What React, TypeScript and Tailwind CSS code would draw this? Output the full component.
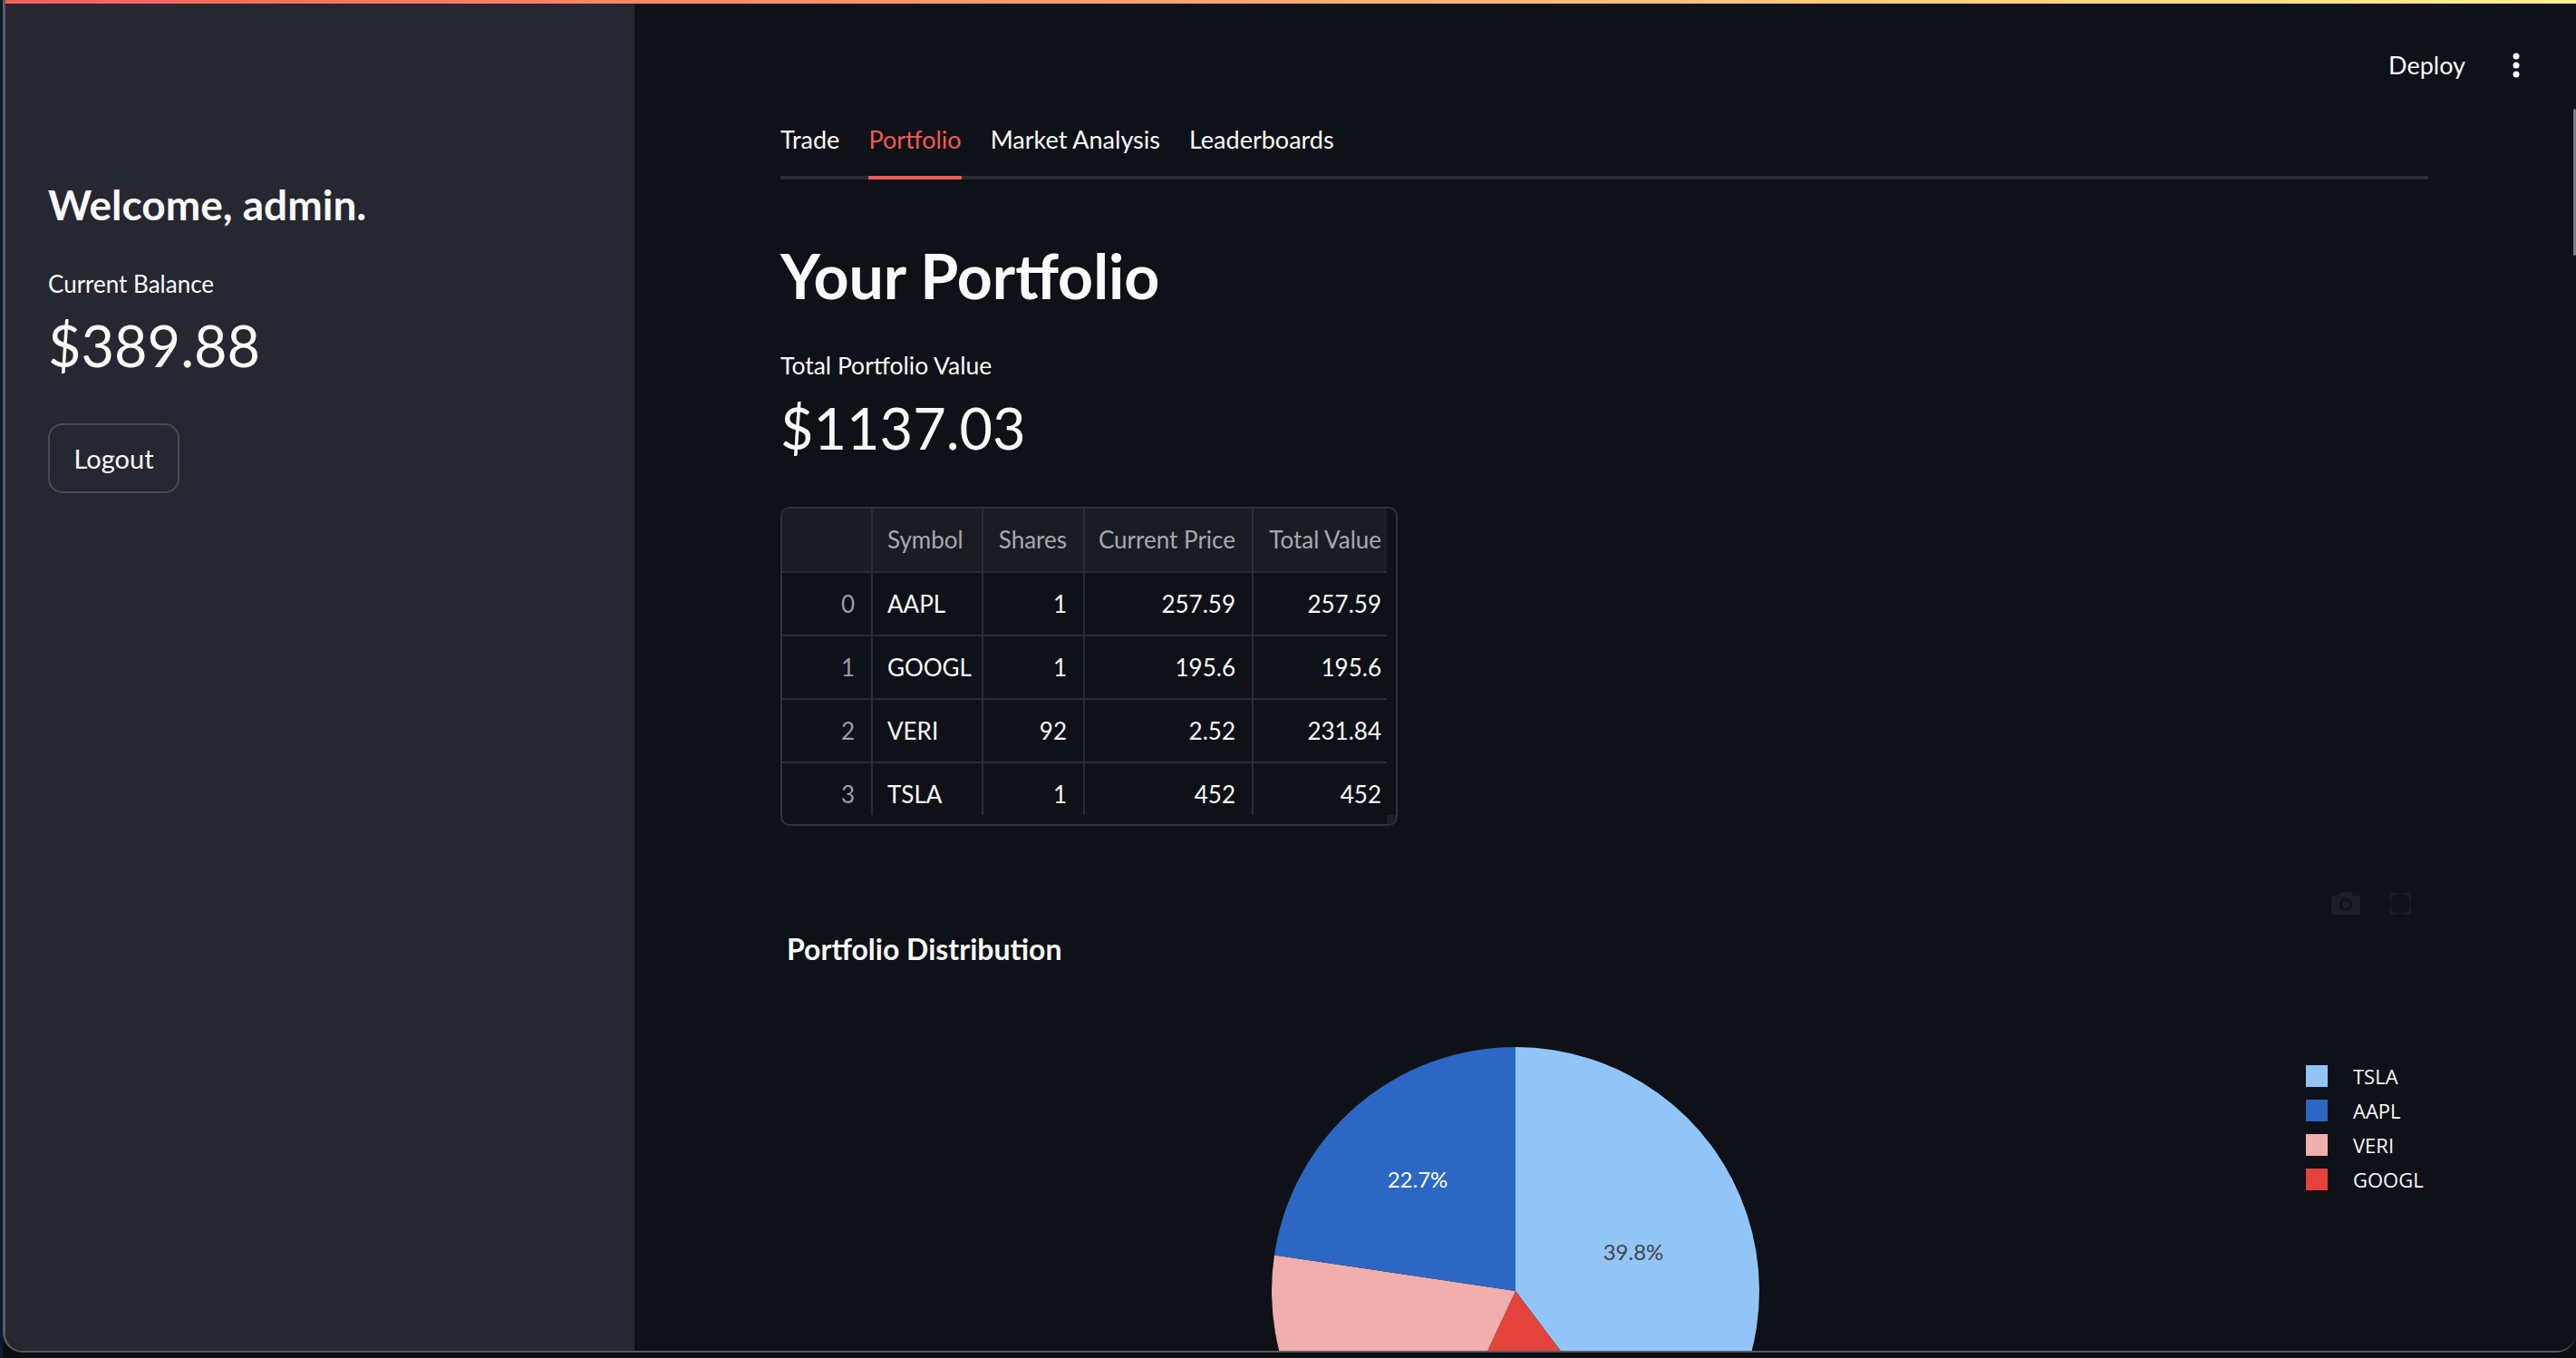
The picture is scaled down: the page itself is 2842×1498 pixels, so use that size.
import React from 'react';

interface Holding {
  index: number;
  symbol: string;
  shares: number;
  price: string;
  total: string;
}

const holdings: Holding[] = [
  { index: 0, symbol: 'AAPL', shares: 1, price: '257.59', total: '257.59' },
  { index: 1, symbol: 'GOOGL', shares: 1, price: '195.6', total: '195.6' },
  { index: 2, symbol: 'VERI', shares: 92, price: '2.52', total: '231.84' },
  { index: 3, symbol: 'TSLA', shares: 1, price: '452', total: '452' },
];

const tabs = ['Trade', 'Portfolio', 'Market Analysis', 'Leaderboards'];

// pie slices, clockwise from 12 o'clock, centre (270,270) r 269
const slices = [
  { label: 'TSLA', color: '#92c5f7', d: 'M270 270 L270 1 A269 269 0 0 1 431.5 485.1 Z' },
  { label: 'GOOGL', color: '#e4433b', d: 'M270 270 L431.5 485.1 A269 269 0 0 1 156.2 513.7 Z' },
  { label: 'VERI', color: '#f0aeac', d: 'M270 270 L156.2 513.7 A269 269 0 0 1 3.9 230.5 Z' },
  { label: 'AAPL', color: '#2c67c4', d: 'M270 270 L3.9 230.5 A269 269 0 0 1 270 1 Z' },
];

const legend = [
  { label: 'TSLA', color: '#92c5f7' },
  { label: 'AAPL', color: '#2c67c4' },
  { label: 'VERI', color: '#f0aeac' },
  { label: 'GOOGL', color: '#e4433b' },
];

const HoldingsTable = () => {
  return (
    <div className="flex h-[352px] w-[681px] flex-col overflow-hidden rounded-[10px] border-2 border-[#30323a] text-[26px]">
      <div className="flex h-[338px]">
        <div className="w-[667px] overflow-hidden">
          <div className="flex h-[71px] w-[679px] border-b-2 border-[#2a2c33] bg-[#1a1c23] text-[#a6a9b0]">
            <div className="w-[100px] shrink-0 border-r-2 border-[#2a2c33]" />
            <div className="flex w-[122px] shrink-0 items-center border-r-2 border-[#2a2c33] pl-[16px]">Symbol</div>
            <div className="flex w-[112px] shrink-0 items-center justify-end border-r-2 border-[#2a2c33] pr-[18px]">Shares</div>
            <div className="flex w-[186px] shrink-0 items-center justify-end border-r-2 border-[#2a2c33] pr-[18px]">Current Price</div>
            <div className="flex w-[159px] shrink-0 items-center justify-end pr-[18px]">Total Value</div>
          </div>
          {holdings.map((h) => (
            <div key={h.symbol} className="flex h-[70px] w-[679px] shrink-0 border-b-2 border-[#2a2c33]">
              <div className="flex w-[100px] shrink-0 items-center justify-end border-r-2 border-[#2a2c33] pr-[18px] text-[#9a9da5]">{h.index}</div>
              <div className="flex w-[122px] shrink-0 items-center border-r-2 border-[#2a2c33] pl-[16px]">{h.symbol}</div>
              <div className="flex w-[112px] shrink-0 items-center justify-end border-r-2 border-[#2a2c33] pr-[18px]">{h.shares}</div>
              <div className="flex w-[186px] shrink-0 items-center justify-end border-r-2 border-[#2a2c33] pr-[18px]">{h.price}</div>
              <div className="flex w-[159px] shrink-0 items-center justify-end pr-[18px]">{h.total}</div>
            </div>
          ))}
        </div>
        <div className="w-[10px]" />
      </div>
      <div className="flex h-[10px] justify-end">
        <div className="h-[10px] w-[10px] bg-[#1e2026]" />
      </div>
    </div>
  );
};

const PortfolioChart = () => {
  return (
    <div className="mt-[73px] flex flex-col">
      <div className="flex h-[25px] items-center justify-end gap-[32px] pr-[19px]">
        <svg width="32" height="25" viewBox="0 0 32 25">
          <path d="M11 0h10l3 4h6a2 2 0 0 1 2 2v17a2 2 0 0 1-2 2H2a2 2 0 0 1-2-2V6a2 2 0 0 1 2-2h6z" fill="#1c1e25" />
          <circle cx="16" cy="14" r="7" fill="#0e1117" />
          <circle cx="16" cy="14" r="4.5" fill="#1c1e25" />
        </svg>
        <svg width="24" height="24" viewBox="0 0 24 24" fill="none" stroke="#1c1e25" strokeWidth="3">
          <path d="M1 8V1h7M16 1h7v7M23 16v7h-7M8 23H1v-7" />
        </svg>
      </div>
      <h4 className="mt-[19px] pl-[7px] text-[32px] font-bold leading-[38px]">Portfolio Distribution</h4>
      <div className="mt-[88px] flex items-start">
        <svg className="ml-[541px] shrink-0" width="540" height="540" viewBox="0 0 540 540">
          {slices.map((s) => (
            <path key={s.label} d={s.d} fill={s.color} />
          ))}
          <text x="162" y="156" textAnchor="middle" fontSize="24" fontFamily="Lato, sans-serif" fill="#ffffff">22.7%</text>
          <text x="400" y="236" textAnchor="middle" fontSize="24" fontFamily="Lato, sans-serif" fill="#444444">39.8%</text>
        </svg>
        <div className="ml-[602px] mt-[21px] flex flex-col gap-[14px] font-['Open_Sans',sans-serif] text-[22px]">
          {legend.map((l) => (
            <div key={l.label} className="flex h-[24px] items-center gap-[28px]">
              <span className="h-[24px] w-[24px] shrink-0" style={{ backgroundColor: l.color }} />
              <span className="leading-[24px]">{l.label}</span>
            </div>
          ))}
        </div>
      </div>
    </div>
  );
};

export default function App() {
  return (
    <div className="h-[1498px] w-full overflow-hidden border-l-[3px] border-[#0d1a2e] bg-[#0a0d11] font-[Lato,sans-serif] text-[#fafafa]">
      <div className="relative flex h-[1492px] overflow-hidden rounded-b-[22px] border-b-2 border-l-[3px] border-[#5a5b61]">
        <div className="absolute inset-x-0 top-0 z-10 h-[4px] bg-linear-to-r from-[#f2605a] to-[#fdf08b]" />

        <aside className="w-[694px] shrink-0 bg-[#262730] pl-[47px] pt-[198px]">
          <h3 className="text-[46px] font-bold leading-[56px]">Welcome, admin.</h3>
          <p className="mt-[43px] text-[26px] leading-[32px]">Current Balance</p>
          <p className="mt-[14px] text-[63px] leading-[76px]">$389.88</p>
          <button className="mt-[48px] flex h-[77px] w-[145px] items-center justify-center rounded-[16px] border-2 border-[#4a4b54] text-[29px] leading-[34px]">
            Logout
          </button>
        </aside>

        <main className="relative flex flex-1 flex-col bg-[#0e1117]">
          <header className="flex h-[114px] shrink-0 items-start justify-end gap-[52px] pr-[62px] pt-[56px]">
            <span className="text-[27px] leading-[32px]">Deploy</span>
            <svg className="mt-[2px]" width="8" height="28" viewBox="0 0 8 28" fill="#fafafa">
              <circle cx="4" cy="4" r="3.5" />
              <circle cx="4" cy="14" r="3.5" />
              <circle cx="4" cy="24" r="3.5" />
            </svg>
          </header>

          <div className="absolute right-0 top-[120px] h-[162px] w-[3px] rounded-full bg-[#7d7d80]" />

          <div className="flex flex-col pl-[161px] pr-[163px]">
            <div className="flex gap-[32px] border-b-4 border-[#292a33]">
              {tabs.map((t) =>
                t === 'Portfolio' ? (
                  <div key={t} className="-mb-[4px] flex h-[84px] items-center border-b-4 border-[#f25a53] text-[27px] leading-[32px] text-[#f25a53]">
                    {t}
                  </div>
                ) : (
                  <div key={t} className="-mb-[4px] flex h-[84px] items-center border-b-4 border-transparent text-[27px] leading-[32px]">
                    {t}
                  </div>
                )
              )}
            </div>

            <h2 className="mt-[65px] text-[68px] font-bold leading-[82px]">Your Portfolio</h2>
            <p className="mt-[42px] text-[26.5px] leading-[32px]">Total Portfolio Value</p>
            <p className="mt-[15px] text-[63px] leading-[76px]">$1137.03</p>

            <div className="mt-[49px]">
              <HoldingsTable />
            </div>

            <PortfolioChart />
          </div>
        </main>
      </div>
    </div>
  );
}
